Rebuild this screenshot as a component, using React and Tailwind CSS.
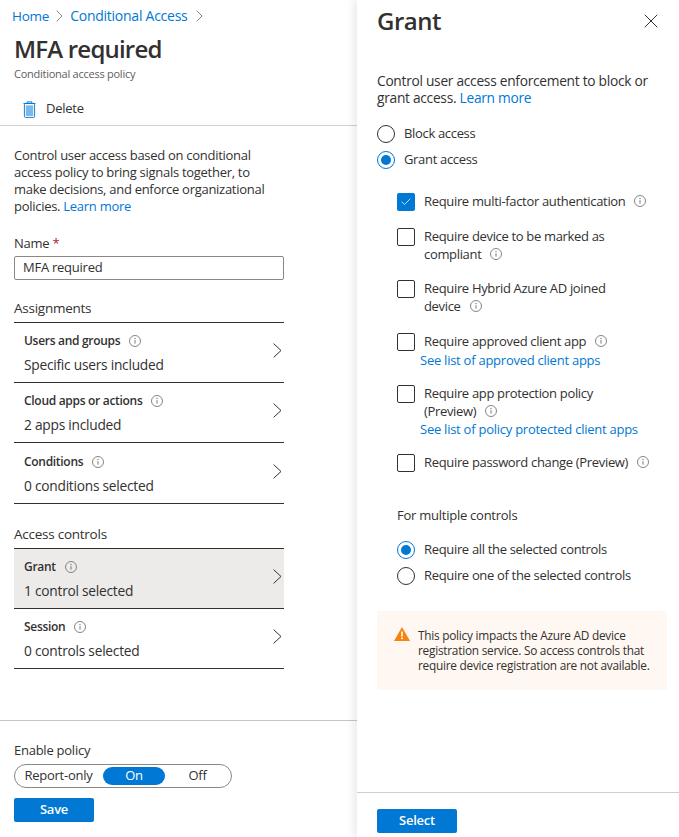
import React from 'react';
import { X, Check } from 'lucide-react';

const InfoIcon = ({ className = '' }) => (
  <svg viewBox="0 0 12 12" className={`w-3 h-3 shrink-0 ${className}`} fill="none">
    <circle cx="6" cy="6" r="5.5" stroke="#797775" strokeWidth="0.9" />
    <path d="M6 5.2v3.4" stroke="#797775" strokeWidth="1" />
    <circle cx="6" cy="3.5" r="0.65" fill="#797775" />
  </svg>
);

const Radio = ({ checked, label }) => (
  <div className="flex items-center h-[26px] text-[#323130]">
    {checked ? (
      <span className="w-[18px] h-[18px] rounded-full border border-[#0078d4] flex items-center justify-center">
        <span className="w-[10px] h-[10px] rounded-full bg-[#0078d4]" />
      </span>
    ) : (
      <span className="w-[18px] h-[18px] rounded-full border border-[#323130]" />
    )}
    <span className="ml-[9px] tracking-[-0.33px]">{label}</span>
  </div>
);

const Checkbox = ({ checked }) => (
  checked ? (
    <span className="w-[18px] h-[18px] rounded-[2px] bg-[#0078d4] flex items-center justify-center shrink-0">
      <Check className="w-3 h-3 text-white" strokeWidth={1.5} />
    </span>
  ) : (
    <span className="w-[18px] h-[18px] rounded-[2px] border border-[#323130] shrink-0" />
  )
);

const Row = ({ title, value, selected, tall }) => (
  <div className={`${tall ? 'h-[61px]' : 'h-[60px]'} border-b border-[#323130] flex items-center pl-[10px] pr-[2px] ${selected ? 'bg-[#edebe9]' : ''}`}>
    <div className="flex-1 pt-[2px] pb-[1px]">
      <div className="flex items-center text-[12px] font-semibold text-[#323130] leading-[16px] tracking-[-0.3px]">
        {title}
        <InfoIcon className="ml-[9px]" />
      </div>
      <div className="mt-[7px] leading-[17px] text-[13.75px] text-[#323130]">{value}</div>
    </div>
    <svg viewBox="0 0 9 15" className="w-[9px] h-[15px] mb-[4px]" fill="none">
      <path d="M.6.6L8 7.5.6 14.4" stroke="#323130" strokeWidth="1" />
    </svg>
  </div>
);

const Requirement = ({ checked, top, children }) => (
  <div className={`flex items-start ${top}`}>
    <Checkbox checked={checked} />
    <div className="ml-[9px] -mt-[1px] leading-[18px] text-[#323130] tracking-[-0.33px]">{children}</div>
  </div>
);

export default function App() {
  return (
    <div className="flex w-[679px] h-[837px] overflow-hidden bg-white text-[13px] font-['Open_Sans','Noto_Sans',sans-serif] tracking-[-0.25px]">
      {/* Policy blade */}
      <div className="w-[357px] shrink-0 flex flex-col">
        <div className="h-[126px] pl-[14px] border-b border-[#d2d0ce]">
          <div className="pt-[7px] flex items-center leading-[18px] text-[13.5px] text-[#0078d4]">
            <span className="-ml-[2px]">Home</span>
            <svg viewBox="0 0 7 12" className="w-[7px] h-[12px] mx-[7px]" fill="none">
              <path d="M.6.6L6 6 .6 11.4" stroke="#8a8886" strokeWidth="1" />
            </svg>
            <span className="text-[14px]">Conditional Access</span>
            <svg viewBox="0 0 7 12" className="w-[7px] h-[12px] ml-[8px]" fill="none">
              <path d="M.6.6L6 6 .6 11.4" stroke="#8a8886" strokeWidth="1" />
            </svg>
          </div>
          <h1 className="mt-[8px] text-[24px] leading-[32px] font-semibold text-[#323130] tracking-[-0.8px]">MFA required</h1>
          <div className="mt-[1px] text-[11px] leading-[16px] text-[#605e5c]">Conditional access policy</div>
          <div className="mt-[12px] flex items-center h-[30px] pl-[9px] text-[#323130]">
            <svg viewBox="0 0 14 18" className="w-[13px] h-[17px]" fill="none">
              <path d="M4.5 2V.8h5V2" stroke="#0078d4" />
              <path d="M.5 2.5h13" stroke="#0078d4" />
              <rect x="1.5" y="2.5" width="11" height="15" rx="1" stroke="#0078d4" />
              <rect x="3" y="4.5" width="8" height="11.5" fill="#7cb8e8" />
            </svg>
            <span className="ml-[10px]">Delete</span>
          </div>
        </div>

        <div className="pl-[14px] w-[284px] flex-1">
          <p className="mt-[21px] leading-[17px] text-[#323130] tracking-[-0.28px]">
            Control user access based on conditional access policy to bring signals together, to make decisions, and enforce organizational policies. <span className="text-[#0078d4]">Learn more</span>
          </p>
          <div className="mt-[20px] leading-[17px] font-medium text-[#323130]">
            Name <span className="text-[#a4262c]">*</span>
          </div>
          <div className="mt-[4px] h-[24px] border border-[#8a8886] rounded-[2px] flex items-center pl-2 text-[#323130]">MFA required</div>

          <div className="mt-[19px] text-[13.5px] leading-[18px] text-[#323130]">Assignments</div>
          <div className="mt-[5px] border-t border-[#323130]">
            <Row title="Users and groups" value="Specific users included" />
            <Row title="Cloud apps or actions" value="2 apps included" />
            <Row title="Conditions" value="0 conditions selected" tall />
          </div>

          <div className="mt-[21px] text-[13.5px] leading-[18px] text-[#323130]">Access controls</div>
          <div className="mt-[5px] border-t border-[#323130]">
            <Row title="Grant" value="1 control selected" selected />
            <Row title="Session" value="0 controls selected" />
          </div>
        </div>

        <div className="h-[117px] border-t border-[#c8c6c4] pl-[14px]">
          <div className="mt-[21px] leading-[17px] text-[#323130]">Enable policy</div>
          <div className="mt-[5px] w-[218px] h-[24px] rounded-full border border-[#8a8886] flex items-center px-[3px] text-[#323130]">
            <span className="w-[85px] text-center pr-[4px]">Report-only</span>
            <span className="w-[62px] h-[18px] rounded-full bg-[#0078d4] text-white flex items-center justify-center">On</span>
            <span className="flex-1 text-center pl-[2px]">Off</span>
          </div>
          <button className="mt-[10px] w-[80px] h-[24px] rounded-[2px] bg-[#0078d4] text-white font-semibold">Save</button>
        </div>
      </div>

      {/* Grant blade */}
      <div className="flex-1 flex flex-col shadow-[-4px_0_8px_rgba(0,0,0,0.08)]">
        <div className="flex-1 pl-[20px] pr-[12px]">
          <div className="flex items-center justify-between h-[42px]">
            <h2 className="text-[24px] font-semibold text-[#323130] tracking-[-0.5px]">Grant</h2>
            <X className="w-6 h-6 mr-[4px] text-[#323130]" strokeWidth={1} />
          </div>
          <p className="mt-[30px] leading-[17px] text-[13.75px] text-[#323130] tracking-[-0.28px]">
            Control user access enforcement to block or grant access. <span className="text-[#0078d4]">Learn more</span>
          </p>
          <div className="mt-[15px]">
            <Radio label="Block access" />
            <Radio checked label="Grant access" />
          </div>

          <div className="pl-[20px]">
            <Requirement checked top="mt-[20px]">
              <span className="inline-flex items-center">Require multi-factor authentication<InfoIcon className="ml-[9px]" /></span>
            </Requirement>
            <Requirement top="mt-[17px]">
              Require device to be marked as<br />
              <span className="inline-flex items-center">compliant<InfoIcon className="ml-[9px]" /></span>
            </Requirement>
            <Requirement top="mt-[17px]">
              Require Hybrid Azure AD joined<br />
              <span className="inline-flex items-center">device<InfoIcon className="ml-[9px]" /></span>
            </Requirement>
            <Requirement top="mt-[18px]">
              <span className="inline-flex items-center">Require approved client app<InfoIcon className="ml-[9px]" /></span>
              <div className="-ml-[4px] mt-[1px] text-[#0078d4] tracking-[-0.25px]">See list of approved client apps</div>
            </Requirement>
            <Requirement top="mt-[16px]">
              Require app protection policy<br />
              <span className="inline-flex items-center">(Preview)<InfoIcon className="ml-[9px]" /></span>
              <div className="-ml-[4px] text-[#0078d4] tracking-[-0.25px]">See list of policy protected client apps</div>
            </Requirement>
            <Requirement top="mt-[16px]">
              <span className="inline-flex items-center">Require password change (Preview)<InfoIcon className="ml-[9px]" /></span>
            </Requirement>

            <div className="mt-[35px] leading-[17px] text-[#323130]">For multiple controls</div>
            <div className="mt-[13px]">
              <Radio checked label="Require all the selected controls" />
              <Radio label="Require one of the selected controls" />
            </div>
          </div>

          <div className="mt-[22px] h-[79px] rounded-[2px] bg-[#fff7f1] flex items-start pl-[17px] pt-[17px] text-[11.85px] leading-[15px] text-[#323130]">
            <svg viewBox="0 0 16 14" className="w-[16px] h-[14px] shrink-0 mt-[-1px]">
              <path d="M8 0L16 14H0z" fill="#f7830f" />
              <rect x="7.2" y="4.5" width="1.6" height="5" fill="#fff" />
              <rect x="7.2" y="10.5" width="1.6" height="1.6" fill="#fff" />
            </svg>
            <div className="ml-[8px]">This policy impacts the Azure AD device registration service. So access controls that require device registration are not available.</div>
          </div>
        </div>
        <div className="h-[45px] border-t border-[#d2d0ce] pl-[20px] pt-[16px]">
          <button className="w-[80px] h-[24px] rounded-[2px] bg-[#0078d4] text-white font-semibold">Select</button>
        </div>
      </div>
    </div>
  );
}
